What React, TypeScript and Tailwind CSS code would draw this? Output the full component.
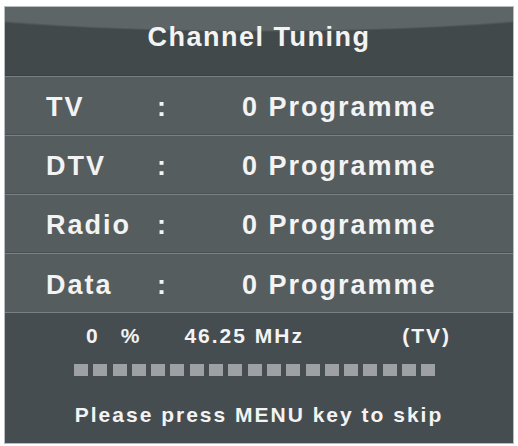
const rows = [
  { label: "TV", value: "0 Programme" },
  { label: "DTV", value: "0 Programme" },
  { label: "Radio", value: "0 Programme" },
  { label: "Data", value: "0 Programme" },
];

const SEGMENTS = 19;

export default function App() {
  return (
    <div className="w-[518px] h-[446px] bg-white pt-[6px] pl-[4px] font-['Liberation_Sans',Arial,sans-serif] font-bold text-[#f3f3f3]">
      <div className="w-[510px] h-[438px] border border-[#b9bdbf] bg-[#565d5f] flex flex-col">
        {/* title bar with curved gloss */}
        <div className="h-[69px] flex items-center justify-center pb-[8px] bg-[radial-gradient(ellipse_80%_40px_at_50%_-15px,#5e6567_95%,#42494b_100%)] border-b border-[#3a4042]">
          <span className="text-[27px] leading-none tracking-[1.5px]">Channel Tuning</span>
        </div>

        {rows.map((row, i) => (
          <div
            key={row.label}
            className={`h-[59px] grid grid-cols-[111px_85px_1fr] items-center pl-[41px] pt-[4px] text-[27px] leading-none tracking-[2px] border-t border-[#7a8184] ${
              i < rows.length - 1 ? "border-b border-b-[#4a5053]" : ""
            }`}
          >
            <span>{row.label}</span>
            <span>:</span>
            <span>{row.value}</span>
          </div>
        ))}

        {/* scan progress */}
        <div className="flex-1 bg-[#464d50] border-t border-[#7a8184] flex flex-col">
          <div className="h-[24px] mt-[10px] flex items-center pl-[81px] pr-[62px] text-[21px] leading-none tracking-[2px]">
            <span>0</span>
            <span className="ml-[21px]">%</span>
            <span className="ml-[43px]">46.25 MHz</span>
            <span className="ml-auto">(TV)</span>
          </div>
          <div className="mt-[17px] flex gap-[5.3px] pl-[69px]">
            {Array.from({ length: SEGMENTS }).map((_, i) => (
              <div key={i} className="w-[14px] h-[12px] bg-[#9da1a3]" />
            ))}
          </div>
          <div className="mt-[26px] h-[24px] flex items-center justify-center text-[21px] leading-none tracking-[2px]">
            Please press MENU key to skip
          </div>
        </div>
      </div>
    </div>
  );
}
